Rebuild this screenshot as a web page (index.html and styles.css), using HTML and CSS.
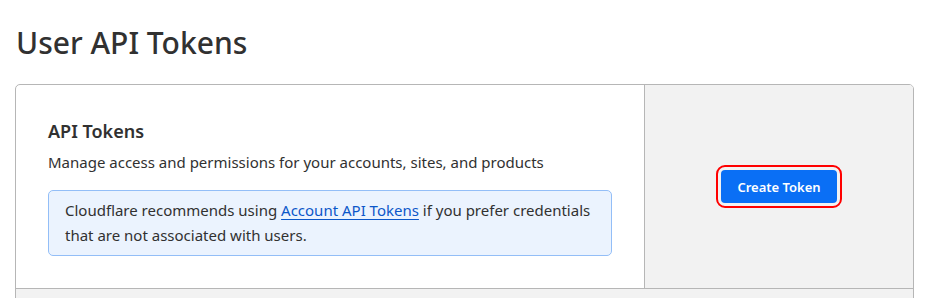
FILE: index.html
```html
<!DOCTYPE html>
<html lang="en">
  <head>
    <meta charset="UTF-8" />
    <meta name="viewport" content="width=device-width, initial-scale=1.0" />
    <title>User API Tokens</title>
    <link rel="stylesheet" href="styles.css">
  </head>
  <body>
    <div class="page">
      <h1>User API Tokens</h1>
      <div class="card">
        <div class="card-main">
          <h2>API Tokens</h2>
          <p class="subtitle">Manage access and permissions for your accounts, sites, and products</p>
          <div class="notice">
            Cloudflare recommends using <a href="#">Account API Tokens</a> if you prefer credentials
            that are not associated with users.
          </div>
        </div>
        <div class="card-side">
          <button class="create-button">Create Token</button>
        </div>
        <div class="card-footer"></div>
      </div>
    </div>
  </body>
</html>
```

FILE: styles.css
```css
body {
  font-family: "Noto Sans", "Open Sans", sans-serif;
  background-color: #fff;
  color: #313131;
  margin: 0;
  padding: 0;
}
.page {
  padding: 0 20px 0 15px;
}
h1 {
  margin: 0;
  padding: 23px 0 0 1px;
  font-size: 30px;
  font-weight: 500;
  line-height: 40px;
  color: #313131;
}
.card {
  margin-top: 21px;
  border: 1px solid #b6b6b6;
  border-radius: 5px;
  display: grid;
  grid-template-columns: 1fr 268px;
  overflow: hidden;
}
.card-main {
  padding: 34px 32px 32px 32px;
  border-right: 1px solid #b6b6b6;
}
.card-main h2 {
  margin: 0;
  font-size: 18px;
  font-weight: 600;
  line-height: 24px;
}
.subtitle {
  margin: 8px 0 17px;
  font-size: 15px;
  line-height: 22px;
}
.notice {
  width: 530px;
  background-color: #ebf3fe;
  border: 1px solid #93bef7;
  border-radius: 5px;
  padding: 7px 16px;
  font-size: 15px;
  line-height: 25px;
}
.notice a {
  color: #0b57c9;
  text-decoration: underline;
  text-underline-offset: 3px;
}
.card-side {
  background-color: #f2f2f2;
  display: flex;
  justify-content: center;
  align-items: center;
}
.create-button {
  background-color: #0a6ff5;
  color: #fff;
  border: none;
  border-radius: 4px;
  font-family: inherit;
  font-size: 13px;
  font-weight: 600;
  white-space: nowrap;
  padding: 0 16px;
  height: 33px;
  outline: 2px solid #ff0000;
  outline-offset: 3px;
  cursor: pointer;
}
.card-footer {
  grid-column: 1 / 3;
  height: 40px;
  border-top: 1px solid #b6b6b6;
  background-color: #f2f2f2;
}
```
